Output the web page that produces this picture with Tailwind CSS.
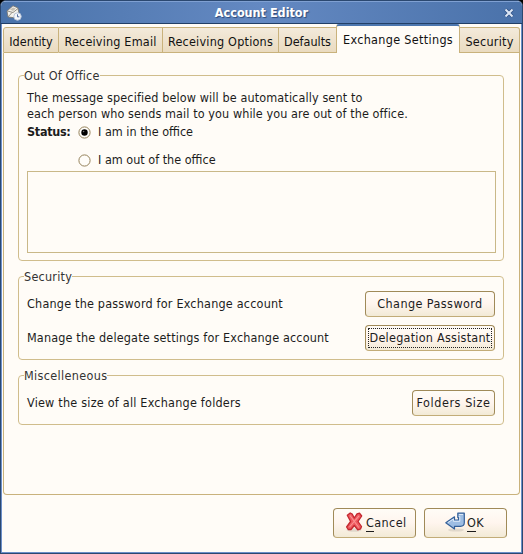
<!DOCTYPE html>
<html lang="en">
<head>
<meta charset="utf-8">
<title>Account Editor</title>
<script src="https://cdn.jsdelivr.net/npm/@tailwindcss/browser@4"></script>
</head>
<body class="bg-black">
<div class="w-[523px] h-[554px] flex flex-col overflow-hidden rounded-t-[6px] bg-[#fffcf7] border border-[#2b4870] text-[12.5px] leading-4 text-[#1c1c1c] whitespace-nowrap font-['DejaVu_Sans_Condensed','DejaVu_Sans',sans-serif]">
  <header class="h-[23px] shrink-0 flex items-center justify-between pl-[5px] pr-[8px] border-t border-t-[#7fa0d2] border-b border-b-[#223f66] bg-linear-to-r from-[#4a73aa] via-[#6489c2] to-[#4a72aa]">
    <svg class="w-4 h-4" viewBox="0 0 16 16"><path d="M1 6 7 .8 12 3 13 9 11 13 2 12Z" fill="#f3f1ec" stroke="#77736a" stroke-width=".8"/><path d="M1.500 6 7 7.500 12 3.500M2 12 6 7.500" fill="none" stroke="#8a867c" stroke-width=".9"/><path d="M4 4.500 7 2.500 10 3.500 7 6Z" fill="#c5c0b4"/><circle cx="11.500" cy="11.500" r="3.700" fill="#f4f7fc" stroke="#b8c4d8"/><path d="M11.500 9.300v2.500h1.800" fill="none" stroke="#3f5e92" stroke-width=".9"/></svg>
    <b class="text-white pr-[3px] [text-shadow:1px_1px_1px_#2d4b7b]">Account Editor</b>
    <svg class="w-[10px] h-[10px]" viewBox="0 0 10 10"><path d="M1.500 1.500 8.500 8.500M8.500 1.500 1.500 8.500" stroke="#2f5085" stroke-width="3.500"/><path d="M1.500 1.500 8.500 8.500M8.500 1.500 1.500 8.500" stroke="#dce6f5" stroke-width="2"/></svg>
  </header>
  <div class="flex-1 flex flex-col pl-[1px] border-x border-b border-[#6c8fc9]">
    <nav class="h-[29px] w-[517px] shrink-0 flex items-end text-[#111]">
      <div class="w-[56px] h-[26px] pt-[6px] flex justify-center border border-[#c9b27c] rounded-tl-[3px] bg-linear-to-b from-[#f3eadb] to-[#eadbc0]"><span class="tracking-[0.05px]">Identity</span></div>
      <div class="w-[104px] h-[26px] pt-[6px] flex justify-center border border-l-0 border-[#c9b27c] bg-linear-to-b from-[#f3eadb] to-[#eadbc0]"><span class="tracking-[0.19px]">Receiving Email</span></div>
      <div class="w-[116px] h-[26px] pt-[6px] flex justify-center border border-l-0 border-[#c9b27c] bg-linear-to-b from-[#f3eadb] to-[#eadbc0]"><span class="tracking-[0.21px]">Receiving Options</span></div>
      <div class="w-[57px] h-[26px] pt-[6px] flex justify-center border border-x-0 border-[#c9b27c] bg-linear-to-b from-[#f3eadb] to-[#eadbc0]"><span>Defaults</span></div>
      <div class="w-[124px] h-[29px] pt-[6px] flex justify-center border-x border-x-[#c9b27c] border-t-2 border-t-[#4c76ae] rounded-t-[3px] bg-[#fffcf7]"><span class="tracking-[0.32px]">Exchange Settings</span></div>
      <div class="w-[60px] h-[26px] pt-[6px] flex justify-center border border-l-0 border-[#c9b27c] rounded-tr-[3px] bg-linear-to-b from-[#f3eadb] to-[#eadbc0]"><span class="tracking-[0.25px]">Security</span></div>
    </nav>
    <main class="w-[517px] h-[442px] shrink-0 flex flex-col gap-[7px] pt-[14px] pl-[14px] border border-t-0 border-[#c9b27c] rounded-b-[4px]">
      <fieldset class="w-[486px] h-[194px] border border-[#d0bd8c] rounded-[4px] pl-[8px] pr-[7px]">
        <legend class="h-[17px] leading-[17px] -ml-[3px] text-[#333] tracking-[0.17px]">Out Of Office</legend>
        <p class="pt-[6px]"><span class="tracking-[0.12px]">The message specified below will be automatically sent to</span><br><span class="tracking-[0.09px]">each person who sends mail to you while you are out of the office.</span></p>
        <div class="flex pt-[2px]">
          <b class="w-[51px] tracking-[-0.3px]">Status:</b>
          <div class="flex flex-col gap-3">
            <label class="flex items-center gap-[7px]"><svg class="w-[13px] h-[13px]" viewBox="0 0 13 13"><circle cx="6.500" cy="6.500" r="5.600" fill="#fffdf9" stroke="#94815a"/><circle cx="6.500" cy="6.500" r="3.200" fill="#000"/><circle cx="5.600" cy="5.500" r=".8" fill="#777"/></svg><span>I am in the office</span></label>
            <label class="flex items-center gap-[7px]"><svg class="w-[13px] h-[13px]" viewBox="0 0 13 13"><circle cx="6.500" cy="6.500" r="5.600" fill="#fffdf9" stroke="#94815a"/></svg><span>I am out of the office</span></label>
          </div>
        </div>
        <div class="mt-[3px] w-[469px] h-[82px] border border-[#c9b888] bg-[#fffcf7]"></div>
      </fieldset>
      <fieldset class="w-[486px] h-[92px] border border-[#d0bd8c] rounded-[4px] px-[8px]">
        <legend class="h-[17px] leading-[17px] -ml-[3px] text-[#333] tracking-[0.25px]">Security</legend>
        <div class="flex flex-col gap-2 pt-[6px]">
          <div class="flex items-center justify-between"><span class="tracking-[0.2px]">Change the password for Exchange account</span><button class="w-[130px] h-[26px] flex items-center justify-center border border-[#a08a58] border-b-[#c2ac78] rounded-[4px] bg-linear-to-b from-[#fffcf7] via-[#fff5ee] to-[#f2ead6]"><span class="tracking-[0.42px]">Change Password</span></button></div>
          <div class="flex items-center justify-between"><span class="tracking-[0.16px]">Manage the delegate settings for Exchange account</span><button class="w-[130px] h-[26px] p-[2px] border border-[#a08a58] border-b-[#c2ac78] rounded-[4px] bg-linear-to-b from-[#fffcf7] via-[#fff5ee] to-[#f2ead6]"><span class="flex h-full items-center justify-center border border-dotted border-[#222]"><span class="tracking-[0.25px]">Delegation Assistant</span></span></button></div>
        </div>
      </fieldset>
      <fieldset class="w-[486px] h-[58px] border border-[#d0bd8c] rounded-[4px] px-[8px]">
        <legend class="h-[17px] leading-[17px] -ml-[3px] text-[#333] tracking-[0.35px]">Miscelleneous</legend>
        <div class="flex items-center justify-between pt-[6px]"><span class="tracking-[0.22px]">View the size of all Exchange folders</span><button class="w-[83px] h-[26px] flex items-center justify-center border border-[#a08a58] border-b-[#c2ac78] rounded-[4px] bg-linear-to-b from-[#fffcf7] via-[#fff5ee] to-[#f2ead6]"><span class="tracking-[0.56px]">Folders Size</span></button></div>
      </fieldset>
    </main>
    <footer class="flex justify-end gap-2 pt-[13px] pr-[14px]">
      <button class="w-[83px] h-[30px] flex items-center pl-[11px] border border-[#a08a58] border-b-[#c2ac78] rounded-[4px] bg-linear-to-b from-[#fffcf7] via-[#fff5ee] to-[#f2ead6]"><svg class="w-[20px] h-[20px] relative -top-[1px]" viewBox="0 0 20 20"><ellipse cx="9" cy="18" rx="7.500" ry="1.800" fill="#00000018"/><path d="M2.300 3.200 5.200 1 7.200 2 9.300 6 12 1.800 14.500 1.200 16.700 4 13 9.500 16.500 14.500 15.500 17 12.800 17.800 9.300 13.500 6 17.500 3.200 17.500 1.600 15 5.600 9.500Z" fill="#ef5a60" stroke="#c3262e" stroke-width="1.300" stroke-linejoin="round"/><path d="M5 3.500 13.800 15.500M14 3.800 4.500 15" stroke="#fa9292" stroke-width="1.100"/></svg><span class="ml-px flex tracking-[0.4px]"><span class="h-[17px] border-b border-[#1c1c1c]">C</span>ancel</span></button>
      <button class="w-[83px] h-[30px] flex items-center pl-[20px] border border-[#a08a58] border-b-[#c2ac78] rounded-[4px] bg-linear-to-b from-[#fffcf7] via-[#fff5ee] to-[#f2ead6]"><svg class="w-[21px] h-[20px] relative -top-[1px]" viewBox="0 0 21 20"><ellipse cx="11" cy="18" rx="8" ry="1.600" fill="#00000018"/><path d="M12.800 1.200H19.300V10.500Q19.300 14.300 15.500 14.300H9.500V17L.8 10.800 9.500 4.800V8H13.500V5.500H12.800Z" fill="#9dbde3" stroke="#335f98" stroke-width="1.200" stroke-linejoin="round"/><path d="M2.800 10.700 8.400 7V9.300H14.800V4.500H13.800M14 2.500H18" fill="none" stroke="#dce9f7" stroke-width="1"/></svg><span class="flex ml-px tracking-[0.4px]"><span class="h-[17px] border-b border-[#1c1c1c]">O</span>K</span></button>
    </footer>
  </div>
</div>
</body>
</html>
